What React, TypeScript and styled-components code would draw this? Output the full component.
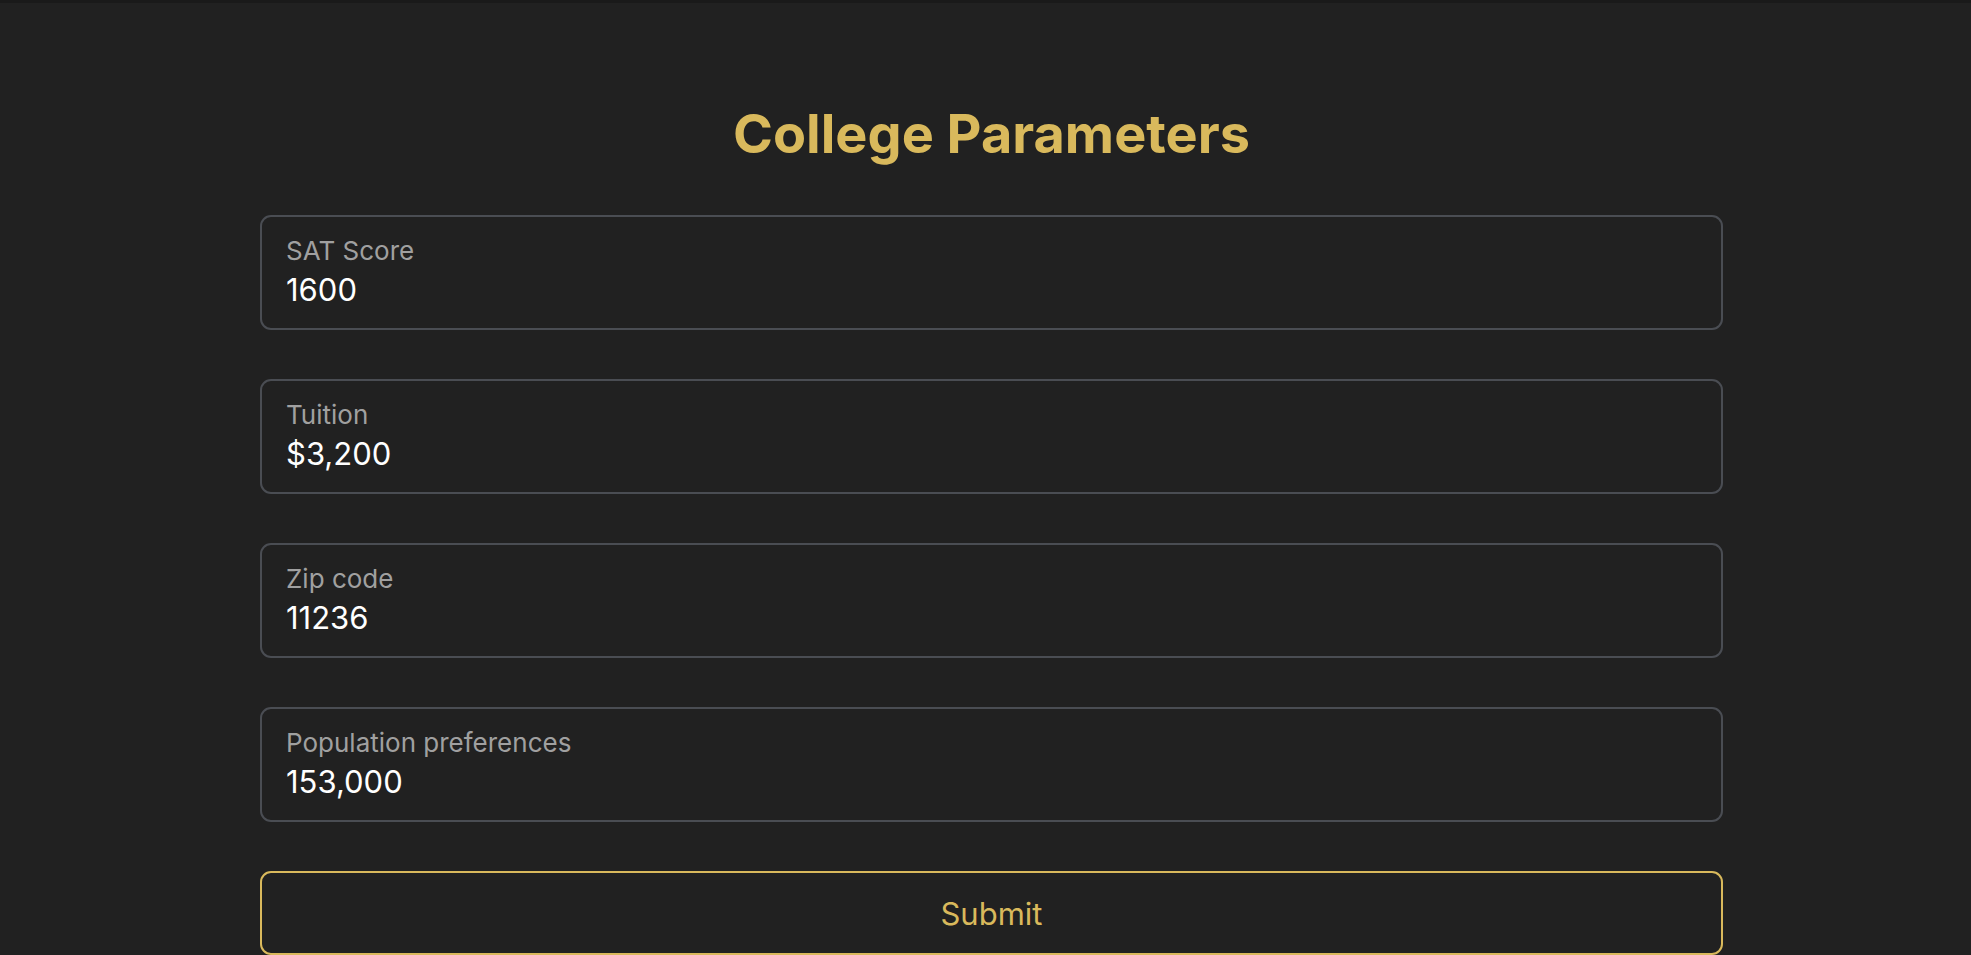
import React from 'react'
import styled, { createGlobalStyle } from 'styled-components'

const GlobalStyle = createGlobalStyle`
  html, body {
    margin: 0;
    padding: 0;
    background: #212121;
    font-family: Inter, "Noto Sans", "Liberation Sans", sans-serif;
  }
`

const gold = '#d9b95c'

const Page = styled.div`
  min-height: 100vh;
  background: #212121;
  border-top: 3px solid #1a1a1a;
  box-sizing: border-box;
`

const Form = styled.form`
  display: flex;
  flex-direction: column;
  gap: 49px;
  padding: 98px 248px 40px 260px;
`

const Title = styled.h1`
  margin: 0;
  text-align: center;
  font-size: 54px;
  font-weight: 700;
  line-height: normal;
  color: ${gold};
`

const Field = styled.label`
  display: flex;
  flex-direction: column;
  gap: 5px;
  padding: 18px 24px 20px;
  border: 2px solid #4a4d53;
  border-radius: 11px;
  cursor: text;
`

const FieldLabel = styled.span`
  font-size: 26px;
  line-height: normal;
  color: #a0a0a0;
`

const FieldInput = styled.input`
  margin: 0;
  padding: 0;
  border: none;
  outline: none;
  background: transparent;
  font-family: inherit;
  font-size: 31px;
  line-height: normal;
  color: #ffffff;
`

const SubmitButton = styled.button`
  height: 84px;
  border: 2px solid ${gold};
  border-radius: 11px;
  background: transparent;
  font-family: inherit;
  font-size: 31px;
  color: ${gold};
  cursor: pointer;
`

const fields = [
  { name: 'sat', label: 'SAT Score', value: '1600' },
  { name: 'tuition', label: 'Tuition', value: '$3,200' },
  { name: 'zip', label: 'Zip code', value: '11236' },
  { name: 'population', label: 'Population preferences', value: '153,000' },
]

export default function App() {
  return (
    <Page>
      <GlobalStyle />
      <Form onSubmit={(e) => e.preventDefault()}>
        <Title>College Parameters</Title>
        {fields.map((f) => (
          <Field key={f.name}>
            <FieldLabel>{f.label}</FieldLabel>
            <FieldInput name={f.name} defaultValue={f.value} />
          </Field>
        ))}
        <SubmitButton type='submit'>Submit</SubmitButton>
      </Form>
    </Page>
  )
}
